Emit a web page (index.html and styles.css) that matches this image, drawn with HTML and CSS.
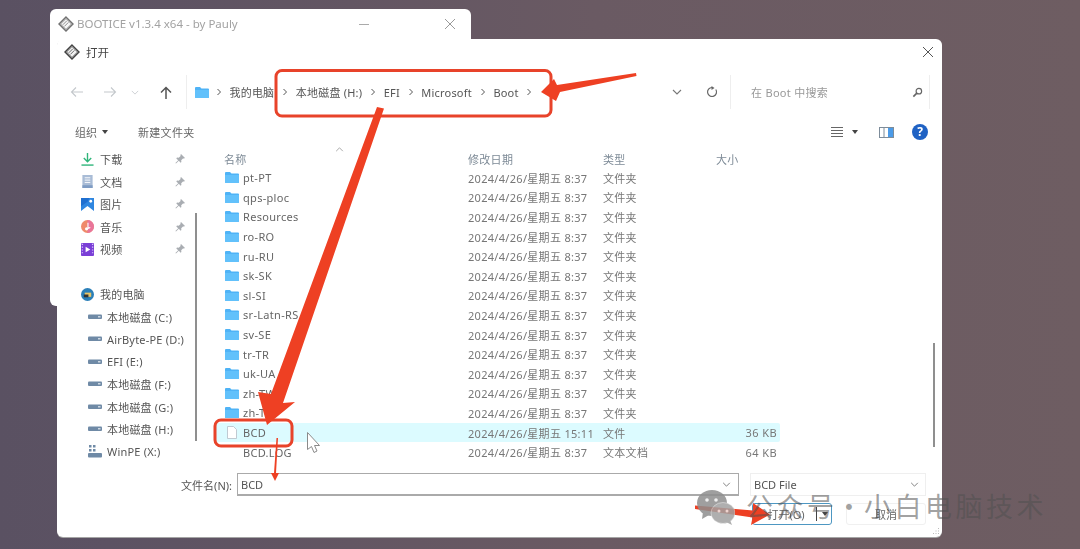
FILE: index.html
```html
<!DOCTYPE html>
<html lang="zh-CN">
<head>
  <meta charset="UTF-8" />
  <title>打开</title>
  <link rel="stylesheet" href="styles.css">
</head>
<body>

  <svg class="defs" width="0" height="0">
    <symbol id="folder" viewBox="0 0 14 13">
      <path d="M0 2a1 1 0 0 1 1-1h4l1.500 1.500H13a1 1 0 0 1 1 1V11a1 1 0 0 1-1 1H1a1 1 0 0 1-1-1z" fill="#4fb3f6"/>
      <path d="M0 4h14v7a1 1 0 0 1-1 1H1a1 1 0 0 1-1-1z" fill="#62c1fb"/>
    </symbol>
    <symbol id="pin" viewBox="0 0 10 10">
      <path d="M6 0l4 4-1 .6-1-.2L6.200 6.300l.2 1.700-.8.700L3.800 6.800 1 9.600.4 9l2.800-2.800L1.300 4.400 2 3.600l1.700.2L5.600 2l-.2-1z" fill="#a9adb2"/>
    </symbol>
    <symbol id="drive" viewBox="0 0 14 6">
      <rect y="0.500" width="14" height="4.500" rx="1" fill="#6f8aa6"/>
      <rect x="10" y="2" width="2.500" height="1.500" fill="#cdd8e2"/>
    </symbol>
    <symbol id="chev" viewBox="0 0 6 8">
      <path d="M1.500 1l3 3-3 3" fill="none" stroke="#555" stroke-width="1"/>
    </symbol>
    <symbol id="down" viewBox="0 0 10 6">
      <path d="M1 1l4 4 4-4" fill="none" stroke="#777" stroke-width="1.100"/>
    </symbol>
    <symbol id="bootice" viewBox="0 0 16 16">
      <path d="M8 .8L15.200 8 8 15.200.8 8z" fill="#8e8e8e" stroke="#3d3d3d" stroke-width="1.100"/>
      <path d="M3.200 8L8 3.200 12.800 8 8 12.800z" fill="#f2f2f2"/>
      <path d="M4.800 8.800l4-4M6.400 10.400l4-4" stroke="#6a6a6a" stroke-width="1"/>
    </symbol>
  </svg>

  <section class="back-window">
    <svg class="app-icon"><use href="#bootice"/></svg>
    <span class="back-title">BOOTICE v1.3.4 x64 - by Pauly</span>
    <span class="back-min"></span>
    <svg class="back-close" viewBox="0 0 10 10"><path d="M0 0l10 10M10 0L0 10" stroke="#999" stroke-width="1"/></svg>
  </section>

  <section class="dialog">
    <header class="titlebar">
      <svg class="app-icon"><use href="#bootice"/></svg>
      <span>打开</span>
      <svg class="close" viewBox="0 0 10 10"><path d="M0 0l10 10M10 0L0 10" stroke="#555" stroke-width="1"/></svg>
    </header>

    <div class="navbar">
      <svg class="nav-btn" viewBox="0 0 14 12"><path d="M13 6H1.500M6 1.500L1.500 6 6 10.500" fill="none" stroke="#c4c8cc" stroke-width="1.100"/></svg>
      <svg class="nav-btn" viewBox="0 0 14 12"><path d="M1 6h11.500M8 1.500L12.500 6 8 10.500" fill="none" stroke="#c4c8cc" stroke-width="1.100"/></svg>
      <svg class="nav-drop" viewBox="0 0 10 6"><path d="M1 1l4 4 4-4" fill="none" stroke="#c4c8cc" stroke-width="1"/></svg>
      <svg class="nav-up" viewBox="0 0 12 13"><path d="M6 13V2M1 6.500L6 1.500l5 5" fill="none" stroke="#555" stroke-width="1.500"/></svg>
      <div class="crumbs">
        <svg class="crumb-folder"><use href="#folder"/></svg>
        <svg class="chev"><use href="#chev"/></svg>
        <span>我的电脑</span>
        <svg class="chev"><use href="#chev"/></svg>
        <span>本地磁盘 (H:)</span>
        <svg class="chev"><use href="#chev"/></svg>
        <span>EFI</span>
        <svg class="chev"><use href="#chev"/></svg>
        <span>Microsoft</span>
        <svg class="chev"><use href="#chev"/></svg>
        <span>Boot</span>
        <svg class="chev"><use href="#chev"/></svg>
      </div>
      <svg class="crumb-drop"><use href="#down"/></svg>
      <svg class="refresh" viewBox="0 0 12 12"><path d="M9.800 3.500A4.500 4.500 0 1 1 6 1.500" fill="none" stroke="#666" stroke-width="1.200"/><path d="M5.500 0v4l3-2z" fill="#666"/></svg>
      <div class="search">
        <span>在 Boot 中搜索</span>
        <svg viewBox="0 0 12 12"><circle cx="7.500" cy="4.500" r="3" fill="none" stroke="#666" stroke-width="1.300"/><path d="M5.500 6.500L1.500 10.500" stroke="#666" stroke-width="1.800"/></svg>
      </div>
    </div>

    <div class="toolbar">
      <span>组织</span>
      <i class="caret"></i>
      <span class="new-folder">新建文件夹</span>
      <svg class="view-icon" viewBox="0 0 12 10"><path d="M0 .5h12M0 3.500h12M0 6.500h12M0 9.500h12" stroke="#666" stroke-width="1"/></svg>
      <i class="caret view-caret"></i>
      <svg class="pane-icon" viewBox="0 0 15 11"><rect x=".5" y=".5" width="14" height="10" fill="#fff" stroke="#7d8c9a"/><rect x="9" y="1" width="5" height="9" fill="#4b9be8"/><path d="M5 1v9" stroke="#7d8c9a"/></svg>
      <svg class="help-icon" viewBox="0 0 16 16"><circle cx="8" cy="8" r="8" fill="#1f62c4"/><text x="8" y="12" text-anchor="middle" class="help-mark">?</text></svg>
    </div>

    <div class="content">
      <nav class="sidebar">
        <a class="side-item">
          <svg class="side-icon" viewBox="0 0 14 14"><path d="M7 0v9M3 5.500L7 9.500l4-4" fill="none" stroke="#2fb57a" stroke-width="1.500"/><path d="M.5 13h13" stroke="#2fb57a" stroke-width="1.500"/></svg>
          <span>下载</span><svg class="pin"><use href="#pin"/></svg>
        </a>
        <a class="side-item">
          <svg class="side-icon" viewBox="0 0 14 14"><rect x="1.500" y="0" width="11" height="14" fill="#a9bcd6"/><rect x="1.500" y="11" width="11" height="3" fill="#7f9cc4"/><path d="M4 3h6M4 5.500h6M4 8h6" stroke="#fff"/></svg>
          <span>文档</span><svg class="pin"><use href="#pin"/></svg>
        </a>
        <a class="side-item">
          <svg class="side-icon" viewBox="0 0 14 14"><path d="M0 0h14v14L7 8.500 0 14z" fill="#2f86e0"/><path d="M0 0h9L7 4 0 9z" fill="#1f6fd0"/><circle cx="10.500" cy="3.500" r="1.500" fill="#fff"/></svg>
          <span>图片</span><svg class="pin"><use href="#pin"/></svg>
        </a>
        <a class="side-item">
          <svg class="side-icon" viewBox="0 0 14 14"><circle cx="7" cy="7" r="7" fill="#ef8a6a"/><path d="M7 0a7 7 0 0 1 7 7 7 7 0 0 1-7 7z" fill="#e9759a"/><path d="M7.500 3v6l2.500-1" fill="none" stroke="#fff" stroke-width="1.200"/><circle cx="6" cy="9.500" r="1.700" fill="#fff"/></svg>
          <span>音乐</span><svg class="pin"><use href="#pin"/></svg>
        </a>
        <a class="side-item">
          <svg class="side-icon" viewBox="0 0 14 14"><rect width="14" height="14" rx="1" fill="#7a3fd6"/><path d="M.8 1.500h1.400M.8 4.500h1.400M.8 7.500h1.400M.8 10.500h1.400M11.800 1.500h1.400M11.800 4.500h1.400M11.800 7.500h1.400M11.800 10.500h1.400" stroke="#d9c4ff" stroke-width="1.200"/><path d="M5 4l5 3-5 3z" fill="#fff"/></svg>
          <span>视频</span><svg class="pin"><use href="#pin"/></svg>
        </a>
        <a class="side-item side-gap">
          <svg class="side-icon" viewBox="0 0 14 14"><circle cx="7" cy="7" r="7" fill="#2b7fb8"/><rect x="4" y="5" width="7" height="4.500" fill="#e9c66a"/><rect x="3" y="7" width="5" height="3" fill="#333"/></svg>
          <span>我的电脑</span>
        </a>
        <a class="side-item drive"><svg class="drive-icon"><use href="#drive"/></svg><span>本地磁盘 (C:)</span></a>
        <a class="side-item drive"><svg class="drive-icon"><use href="#drive"/></svg><span>AirByte-PE (D:)</span></a>
        <a class="side-item drive"><svg class="drive-icon"><use href="#drive"/></svg><span>EFI (E:)</span></a>
        <a class="side-item drive"><svg class="drive-icon"><use href="#drive"/></svg><span>本地磁盘 (F:)</span></a>
        <a class="side-item drive"><svg class="drive-icon"><use href="#drive"/></svg><span>本地磁盘 (G:)</span></a>
        <a class="side-item drive"><svg class="drive-icon"><use href="#drive"/></svg><span>本地磁盘 (H:)</span></a>
        <a class="side-item drive">
          <svg class="drive-icon winpe" viewBox="0 0 14 13"><path d="M1 0h2.500v2.500H1zM5 0h2.500v2.500H5zM1 4h2.500v2.500H1zM5 4h2.500v2.500H5z" fill="#6f8aa6"/><rect y="8" width="14" height="4.500" rx="1" fill="#6f8aa6"/></svg>
          <span>WinPE (X:)</span>
        </a>
        <span class="side-scroll"></span>
      </nav>

      <div class="files">
        <div class="row head">
          <span class="name-head">名称</span><span>修改日期</span><span>类型</span><span>大小</span>
          <svg class="sort" viewBox="0 0 10 6"><path d="M1 5l4-4 4 4" fill="none" stroke="#999"/></svg>
        </div>
        <div class="row"><span class="name"><svg><use href="#folder"/></svg>pt-PT</span><span>2024/4/26/星期五 8:37</span><span>文件夹</span><span></span></div>
        <div class="row"><span class="name"><svg><use href="#folder"/></svg>qps-ploc</span><span>2024/4/26/星期五 8:37</span><span>文件夹</span><span></span></div>
        <div class="row"><span class="name"><svg><use href="#folder"/></svg>Resources</span><span>2024/4/26/星期五 8:37</span><span>文件夹</span><span></span></div>
        <div class="row"><span class="name"><svg><use href="#folder"/></svg>ro-RO</span><span>2024/4/26/星期五 8:37</span><span>文件夹</span><span></span></div>
        <div class="row"><span class="name"><svg><use href="#folder"/></svg>ru-RU</span><span>2024/4/26/星期五 8:37</span><span>文件夹</span><span></span></div>
        <div class="row"><span class="name"><svg><use href="#folder"/></svg>sk-SK</span><span>2024/4/26/星期五 8:37</span><span>文件夹</span><span></span></div>
        <div class="row"><span class="name"><svg><use href="#folder"/></svg>sl-SI</span><span>2024/4/26/星期五 8:37</span><span>文件夹</span><span></span></div>
        <div class="row"><span class="name"><svg><use href="#folder"/></svg>sr-Latn-RS</span><span>2024/4/26/星期五 8:37</span><span>文件夹</span><span></span></div>
        <div class="row"><span class="name"><svg><use href="#folder"/></svg>sv-SE</span><span>2024/4/26/星期五 8:37</span><span>文件夹</span><span></span></div>
        <div class="row"><span class="name"><svg><use href="#folder"/></svg>tr-TR</span><span>2024/4/26/星期五 8:37</span><span>文件夹</span><span></span></div>
        <div class="row"><span class="name"><svg><use href="#folder"/></svg>uk-UA</span><span>2024/4/26/星期五 8:37</span><span>文件夹</span><span></span></div>
        <div class="row"><span class="name"><svg><use href="#folder"/></svg>zh-TW</span><span>2024/4/26/星期五 8:37</span><span>文件夹</span><span></span></div>
        <div class="row"><span class="name"><svg><use href="#folder"/></svg>zh-TW</span><span>2024/4/26/星期五 8:37</span><span>文件夹</span><span></span></div>
        <div class="row selected">
          <span class="name"><svg viewBox="0 0 14 13"><path d="M2.500.5h6l3 3v9h-9z" fill="#fff" stroke="#b4bcc6" stroke-width=".8"/></svg>BCD</span>
          <span>2024/4/26/星期五 15:11</span><span>文件</span><span class="size">36 KB</span>
        </div>
        <div class="row"><span class="name"><svg></svg>BCD.LOG</span><span>2024/4/26/星期五 8:37</span><span>文本文档</span><span class="size">64 KB</span></div>
      </div>
      <span class="list-scroll"></span>
    </div>

    <div class="filename-row">
      <label class="filename-label">文件名(N):</label>
      <div class="filename-input"><span>BCD</span><svg><use href="#down"/></svg></div>
      <div class="filetype"><span>BCD File</span><svg><use href="#down"/></svg></div>
    </div>

    <div class="buttons">
      <div class="btn open"><span>打开(O)</span><i class="split"></i><i class="caret open-caret"></i></div>
      <div class="btn cancel">取消</div>
    </div>

    <svg class="grip" viewBox="0 0 8 8"><path d="M6 1h1v1H6zM3.500 3.500h1v1h-1zM6 3.500h1v1H6zM1 6h1v1H1zM3.500 6h1v1h-1zM6 6h1v1H6z" fill="#bbb"/></svg>
  </section>

  <!-- 标注 -->
  <svg class="marks" viewBox="0 0 1080 549">
    <rect x="276" y="70.500" width="275" height="45.500" rx="6" fill="none" stroke="#e8432a" stroke-width="3"/>
    <rect x="215" y="420" width="77" height="26" rx="6" fill="none" stroke="#e8432a" stroke-width="3"/>
    <path d="M377 107l7 1.500L283 403l12-1-28 23-9-33 13 2z" fill="#ee4023"/>
    <path d="M636 73l.5 3L560 92l-4 9-15-9 13-13 3 6z" fill="#ee4023"/>
    <path d="M276.500 438h1.500l-2 35 3 0-4 8-4-8 3 0z" fill="#ee4023"/>
    <path d="M695 505.500l58 5 0-7.500 17 11.500-19 10.500 1.500-7.500-57.500-8.500z" fill="#ee4023"/>
    <path d="M307.500 432.500v17l4-3 2.500 6 3-1.500-2.500-5.500 5 0z" fill="#fff" stroke="#8a8a8a" stroke-width="1"/>
  </svg>

  <div class="watermark">
    <svg viewBox="0 0 38 36"><ellipse cx="15" cy="13" rx="15" ry="13" fill="#8f8f8f"/><path d="M6 22l-1 7 7-4z" fill="#8f8f8f"/><ellipse cx="26" cy="23" rx="12" ry="10.500" fill="#a2a2a2" stroke="#fff" stroke-opacity=".4"/><path d="M33 30l2 5-6-3z" fill="#a2a2a2"/><circle cx="10" cy="10" r="1.800" fill="#eee"/><circle cx="19" cy="10" r="1.800" fill="#eee"/><circle cx="22" cy="21" r="1.500" fill="#eee"/><circle cx="30" cy="21" r="1.500" fill="#eee"/></svg>
    <span>公众号 · 小白电脑技术</span>
  </div>

</body>
</html>
```

FILE: styles.css
```css
* {
  box-sizing: border-box;
}

html, body {
  margin: 0;
  padding: 0;
  height: 100%;
}

body {
  position: relative;
  width: 1080px;
  height: 549px;
  overflow: hidden;
  font-family: "Noto Sans", "Noto Sans CJK SC", sans-serif;
  font-size: 11px;
  color: #555;
  background: linear-gradient(90deg, #5a5162 0%, #5c5263 10%, #6a5a63 55%, #6e5d62 100%);
}

.defs {
  position: absolute;
}

svg {
  flex: none;
  display: block;
}

/* ventana de atrás */
.back-window {
  position: absolute;
  left: 50px;
  top: 9px;
  width: 421px;
  height: 297px;
  padding: 7px 8px;
  background: #fff;
  border-radius: 6px;
  display: flex;
  align-items: flex-start;
  filter: blur(0.4px);
}

.back-window .app-icon {
  opacity: 0.75;
}

.app-icon {
  width: 16px;
  height: 16px;
}

.back-title {
  margin-left: 3px;
  font-size: 11.500px;
  line-height: 16px;
  color: #a2a2a2;
}

.back-min {
  position: absolute;
  left: 309px;
  top: 15px;
  width: 10px;
  height: 1px;
  background: #aaa;
}

.back-close {
  position: absolute;
  left: 395px;
  top: 10px;
  width: 10px;
  height: 10px;
}

/* dialogo */
.dialog {
  position: absolute;
  left: 57px;
  top: 39px;
  width: 885px;
  height: 498px;
  background: #fff;
  border-radius: 6px;
  box-shadow: 0 1px 0 #a5a5a5;
  display: flex;
  flex-direction: column;
  filter: blur(0.4px);
}

.titlebar {
  height: 26px;
  padding: 0 9px 0 7px;
  display: flex;
  align-items: center;
  gap: 6px;
  color: #444;
  font-size: 11.500px;
}

.close {
  width: 10px;
  height: 10px;
  margin-left: auto;
}

.navbar {
  margin-top: 10px;
  height: 34px;
  display: flex;
  align-items: center;
  position: relative;
}

.nav-btn {
  width: 14px;
  height: 12px;
  margin-left: 13px;
}

.nav-btn + .nav-btn {
  margin-left: 19px;
}

.nav-drop {
  width: 8px;
  height: 5px;
  margin-left: 14px;
}

.nav-up {
  width: 12px;
  height: 13px;
  margin-left: 21px;
}

.crumbs {
  margin-left: 14px;
  padding-left: 8px;
  height: 34px;
  border-left: 1px solid #eee;
  display: flex;
  align-items: center;
  gap: 7px;
  letter-spacing: 0.200px;
}

.crumb-folder {
  width: 14px;
  height: 13px;
  margin-right: -1px;
}

.chev {
  width: 6px;
  height: 8px;
  margin: 0 0.750px;
}

.crumb-drop {
  position: absolute;
  left: 615px;
  top: 14px;
  width: 10px;
  height: 6px;
}

.refresh {
  position: absolute;
  left: 649px;
  top: 11px;
  width: 12px;
  height: 12px;
}

.search {
  position: absolute;
  left: 673px;
  top: 0;
  width: 200px;
  height: 34px;
  padding: 0 6px 0 20px;
  border-left: 1px solid #eee;
  border-right: 1px solid #eee;
  display: flex;
  align-items: center;
  justify-content: space-between;
  color: #999;
  letter-spacing: 0.300px;
}

.search svg {
  width: 11px;
  height: 11px;
}

.toolbar {
  margin-top: 8px;
  height: 30px;
  padding: 0 14px 0 18px;
  display: flex;
  align-items: center;
  color: #666;
}

.caret {
  display: block;
  width: 0;
  height: 0;
  margin-left: 5px;
  border-left: 3.500px solid transparent;
  border-right: 3.500px solid transparent;
  border-top: 4px solid #444;
}

.new-folder {
  margin-left: 30px;
  letter-spacing: 0.300px;
}

.view-icon {
  width: 12px;
  height: 10px;
  margin-left: auto;
}

.view-caret {
  margin-left: 9px;
}

.pane-icon {
  width: 15px;
  height: 11px;
  margin-left: 21px;
}

.help-icon {
  width: 16px;
  height: 16px;
  margin-left: 18px;
}

.help-mark {
  font-size: 12px;
  font-weight: 700;
  fill: #fff;
}

.content {
  position: relative;
  height: 316px;
  display: flex;
}

.sidebar {
  position: relative;
  width: 159px;
  padding-top: 1px;
  flex: none;
}

.side-item {
  height: 22.500px;
  padding-left: 24px;
  display: flex;
  align-items: center;
  gap: 6px;
  color: #555;
  letter-spacing: 0.200px;
}

.side-icon {
  width: 13px;
  height: 13px;
}

.pin {
  position: absolute;
  left: 118px;
  width: 10px;
  height: 10px;
}

.side-gap {
  margin-top: 22.500px;
}

.drive {
  padding-left: 31px;
  gap: 5px;
}

.drive-icon {
  width: 14px;
  height: 6px;
}

.winpe {
  height: 13px;
}

.side-scroll {
  position: absolute;
  left: 138px;
  top: 66px;
  width: 2px;
  height: 228px;
  background: #8f8f8f;
}

.files {
  width: 564px;
  flex: none;
}

.row {
  position: relative;
  height: 19.600px;
  display: grid;
  grid-template-columns: 252px 135px 113px 64px;
  align-items: center;
  color: #777;
  letter-spacing: 0.300px;
}

.head {
  height: 21px;
  padding-top: 4px;
  color: #7d8a96;
  align-items: start;
}

.name-head {
  padding-left: 8px;
}

.sort {
  position: absolute;
  left: 119px;
  top: 0;
  width: 9px;
  height: 5px;
}

.name {
  display: flex;
  align-items: center;
  gap: 4px;
  padding-left: 9px;
  color: #666;
}

.name svg {
  width: 14px;
  height: 13px;
}

.selected {
  background: #dcfbff;
  border-radius: 2px;
}

.size {
  text-align: right;
  padding-right: 3px;
  letter-spacing: 0.400px;
}

.list-scroll {
  position: absolute;
  left: 876px;
  top: 196px;
  width: 2px;
  height: 104px;
  background: #8f8f8f;
}

.filename-row {
  margin-top: 10px;
  height: 23px;
  display: flex;
  align-items: center;
}

.filename-label {
  width: 175px;
  text-align: right;
  color: #555;
}

.filename-input {
  width: 502px;
  height: 23px;
  margin-left: 5px;
  padding: 0 7px 0 3px;
  border: 1px solid #aaa;
  border-bottom-width: 2px;
  display: flex;
  align-items: center;
  justify-content: space-between;
}

.filetype {
  width: 176px;
  height: 23px;
  margin-left: 11px;
  padding: 0 6px 0 3px;
  border: 1px solid #efefef;
  display: flex;
  align-items: center;
  justify-content: space-between;
}

.filename-input svg, .filetype svg {
  width: 9px;
  height: 5px;
}

.buttons {
  margin-top: 7px;
  padding-left: 695px;
  display: flex;
  gap: 14px;
}

.btn {
  height: 22px;
  width: 80px;
  display: flex;
  align-items: center;
  justify-content: center;
  color: #666;
}

.open {
  position: relative;
  border: 1px solid #4d97c2;
  border-radius: 3px;
  padding-right: 12px;
}

.split {
  position: absolute;
  right: 14px;
  top: 3px;
  width: 1px;
  height: 14px;
  background: #444;
}

.open-caret {
  position: absolute;
  right: 3px;
  top: 8px;
  margin: 0;
}

.cancel {
  border: 1px solid #f0f0f0;
  border-radius: 3px;
}

.grip {
  position: absolute;
  right: 2px;
  bottom: 2px;
  width: 8px;
  height: 8px;
}

/* anotaciones */
.marks {
  position: absolute;
  left: 0;
  top: 0;
  width: 1080px;
  height: 549px;
  filter: blur(0.3px);
}

.watermark {
  position: absolute;
  left: 697px;
  top: 486px;
  display: flex;
  align-items: center;
  gap: 11px;
  font-family: "Noto Sans CJK SC", sans-serif;
  font-size: 27px;
  letter-spacing: 3.500px;
  word-spacing: -11.500px;
  line-height: 36px;
  color: rgba(80, 80, 80, 0.55);
  white-space: nowrap;
}

.watermark svg {
  width: 38px;
  height: 36px;
  margin-top: 4px;
  opacity: 0.85;
}
```
